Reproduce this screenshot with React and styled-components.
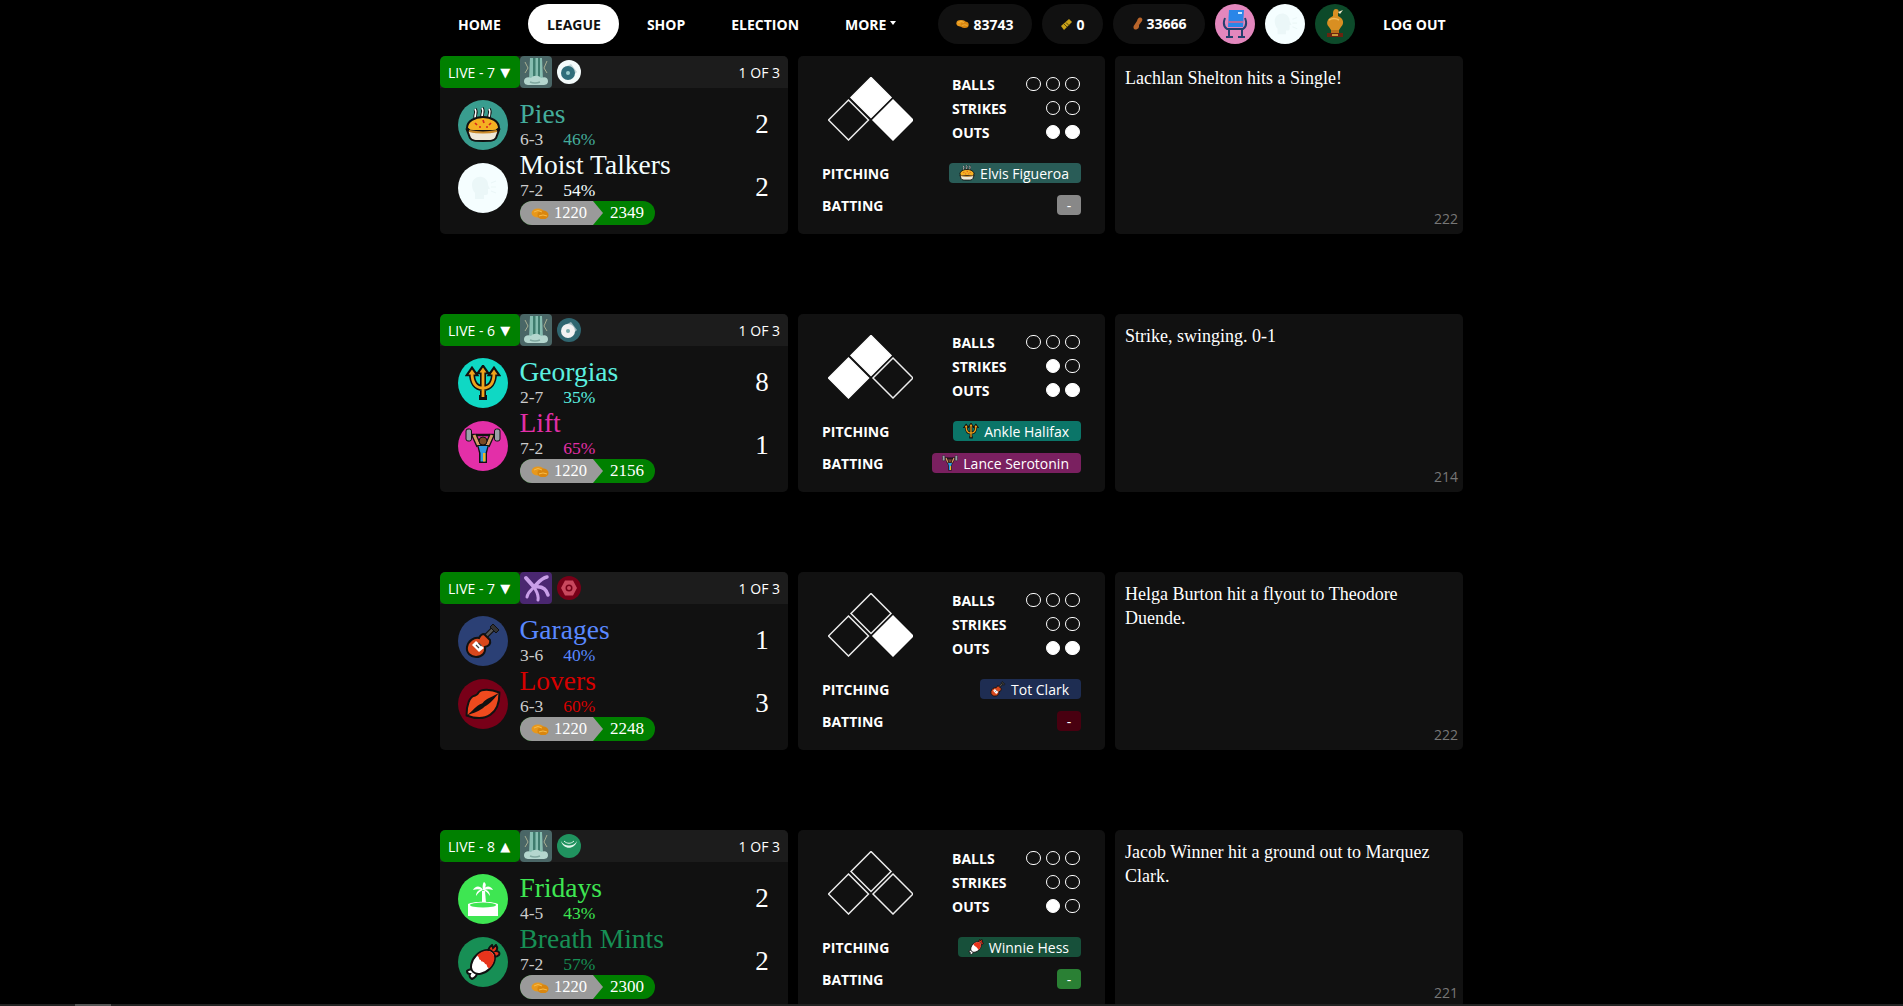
import React from "react";
import styled, { createGlobalStyle } from "styled-components";

const Global = createGlobalStyle`
  html, body { margin: 0; padding: 0; background: #000; height: 100%; overflow: hidden; }
  body { font-family: "Open Sans", "Liberation Sans", sans-serif; color: #fff; }
  #root { height: 100%; }
`;

const SERIF = `"Liberation Serif", "DejaVu Serif", serif`;

const Page = styled.div`
  width: 1023px;
  margin: 0 auto;
`;
const Nav = styled.nav`
  display: flex;
  align-items: center;
  height: 40px;
  padding: 4px 0 12px;
  white-space: nowrap;
`;
const NavLinks = styled.div`
  display: flex;
  gap: 9px;
  margin-left: -0.5px;
`;
const NavLink = styled.a`
  display: flex;
  flex: none;
  align-items: center;
  height: 40px;
  padding: 0 18.5px;
  border-radius: 20px;
  font-size: 14px;
  font-weight: 700;
  text-transform: uppercase;
  color: ${(p) => (p.$active ? "#111" : "#fff")};
  background: ${(p) => (p.$active ? "#fff" : "transparent")};
`;
const Caret = styled.span`
  display: inline-block;
  margin-left: 4px;
  margin-top: -2px;
  border-top: 4px solid #fff;
  border-left: 3px solid transparent;
  border-right: 3px solid transparent;
`;
const NavRight = styled.div`
  display: flex;
  flex: none;
  align-items: center;
  gap: 10px;
  margin-left: 23.5px;
`;
const Stat = styled.div`
  display: flex;
  align-items: center;
  gap: 4px;
  height: 40px;
  box-sizing: border-box;
  padding: 0 18px ${(p) => (p.$lift ? "2px" : "0")};
  border-radius: 20px;
  background: #111;
  font-size: 14px;
  font-weight: 700;
`;
const Avatar = styled.div`
  display: flex;
  flex: none;
  align-items: center;
  justify-content: center;
  width: 40px;
  height: 40px;
  border-radius: 50%;
  background: ${(p) => p.$bg};
`;

const Games = styled.div`
  display: flex;
  flex-direction: column;
  gap: 80px;
`;
const Game = styled.section`
  display: grid;
  grid-template-columns: 348px 307px 348px;
  gap: 10px;
  height: 178px;
`;
const Card = styled.div`
  background: #111;
  border-radius: 5px;
  overflow: hidden;
`;
const Strip = styled.header`
  display: flex;
  align-items: center;
  height: 32px;
  background: #1c1c1c;
  font-size: 14px;
`;
const LiveBadge = styled.div`
  display: flex;
  align-items: center;
  gap: 5px;
  width: 80px;
  box-sizing: border-box;
  height: 32px;
  padding-left: 8px;
  background: #008000;
  border-radius: 5px;
  white-space: nowrap;
`;
const Arrow = styled.span`
  font-family: "DejaVu Sans", sans-serif;
  font-size: 13px;
`;
const WeatherBox = styled.div`
  display: flex;
  width: 32px;
  height: 32px;
  border-radius: 4px;
  background: ${(p) => p.$bg};
`;
const StadiumMark = styled.div`
  display: flex;
  align-items: center;
  justify-content: center;
  width: 24px;
  height: 24px;
  margin-left: 5px;
  border-radius: 50%;
  background: ${(p) => p.$bg};
`;
const SeriesText = styled.span`
  margin-left: auto;
  padding-right: 8px;
`;
const Teams = styled.div`
  padding-top: 11px;
`;
const TeamRow = styled.div`
  display: flex;
  align-items: center;
  padding: 0 14px 0 18px;
`;
const TeamLogo = styled.div`
  display: flex;
  align-items: center;
  justify-content: center;
  flex: none;
  width: 50px;
  height: 50px;
  border-radius: 50%;
  background: ${(p) => p.$bg};
  margin-right: 12px;
`;
const TeamInfo = styled.div`
  flex: 1;
  min-width: 0;
`;
const TeamName = styled.div`
  font-family: ${SERIF};
  font-size: 27.5px;
  line-height: 30px;
  margin-left: -0.5px;
  color: ${(p) => p.$color};
`;
const TeamStats = styled.div`
  display: flex;
  gap: 20px;
  height: 21px;
  font-family: ${SERIF};
  font-size: 17.5px;
  line-height: 21px;
  color: #ccc;
`;
const Pct = styled.span`
  color: ${(p) => p.$color};
`;
const Score = styled.div`
  width: 24px;
  flex: none;
  text-align: center;
  font-family: ${SERIF};
  font-size: 27px;
`;
const Bet = styled.div`
  display: inline-flex;
  align-items: center;
  height: 24px;
  border-radius: 12px;
  overflow: hidden;
  background: #008000;
  font-family: ${SERIF};
  font-size: 17px;
  color: #fff;
`;
const BetStake = styled.span`
  display: flex;
  align-items: center;
  gap: 5px;
  height: 24px;
  width: 83px;
  box-sizing: border-box;
  padding-left: 11px;
  background: #9a9a9a;
  font-size: 16.5px;
  clip-path: polygon(0 0, 73px 0, 83px 50%, 73px 100%, 0 100%);
`;
const BetPayout = styled.span`
  padding: 0 11px 0 7px;
`;

const Middle = styled(Card)`
  display: flex;
  flex-direction: column;
`;
const Field = styled.div`
  display: flex;
  align-items: center;
  justify-content: space-between;
  height: 72px;
  padding: 16px 25.5px 0 30px;
`;
const BaseDiagram = styled.div`
  display: flex;
  margin-top: 1px;
`;
const Counts = styled.div`
  width: 127.5px;
`;
const CountRow = styled.div`
  display: flex;
  align-items: center;
  height: 24px;
  font-size: 14px;
  font-weight: 700;
`;
const Dots = styled.div`
  display: flex;
  gap: 4.5px;
  margin-left: auto;
`;
const Dot = styled.span`
  width: 14.7px;
  height: 14.7px;
  box-sizing: border-box;
  border-radius: 50%;
  border: 1.5px solid #fff;
  background: ${(p) => (p.$on ? "#fff" : "transparent")};
`;
const Players = styled.div`
  margin-top: 13px;
`;
const PlayerRow = styled.div`
  display: flex;
  align-items: center;
  justify-content: space-between;
  height: 32px;
  padding: 0 24px;
  font-size: 14px;
  font-weight: 700;
`;
const Chip = styled.div`
  display: flex;
  align-items: center;
  gap: 5px;
  height: 20px;
  min-width: 24px;
  box-sizing: border-box;
  padding: ${(p) => (p.$empty ? "0" : "0 12px 0 10px")};
  justify-content: center;
  border-radius: 4px;
  background: ${(p) => p.$bg};
  font-size: 14px;
  font-weight: 400;
  color: #fff;
`;
const LogCard = styled(Card)`
  display: flex;
  flex-direction: column;
  padding: 10px 5px 6px 10px;
`;
const LogText = styled.div`
  flex: 1;
  padding-right: 5px;
  font-family: ${SERIF};
  font-size: 18px;
  line-height: 24px;
  color: #fff;
`;
const LogCount = styled.div`
  text-align: right;
  font-size: 14px;
  line-height: 19px;
  color: #777;
`;
const ScrollTrack = styled.div`
  position: fixed;
  left: 0;
  right: 0;
  bottom: 0;
  height: 2px;
  background: #222;
`;
const ScrollThumb = styled.div`
  position: absolute;
  left: 75px;
  width: 36px;
  height: 2px;
  background: #555;
`;

/* ---------- drawings ---------- */
const Coin = ({ s = 18 }) => (
  <svg width={s} height={s * 0.72} viewBox="0 0 18 13">
    <ellipse cx="7" cy="6" rx="6.500" ry="4.600" fill="#e8981c" />
    <ellipse cx="12" cy="8" rx="5.600" ry="4.400" fill="#d9860f" />
    <path d="M3 5q4-3 8 0M8 9q4-2 8 0" stroke="#f7bd4a" strokeWidth="1" fill="none" />
  </svg>
);
const Ticket = () => (
  <svg width="13" height="13" viewBox="0 0 13 13">
    <path d="M1 8 9 1l3 3-8 8z" fill="#c9a21a" />
    <path d="M4 6l3 3M6 4.500l3 3" stroke="#5c4a08" strokeWidth="1" />
  </svg>
);
const Peanut = () => (
  <svg width="12" height="13" viewBox="-2 0 12 13">
    <path d="M7 0.500c2 0 3 2 2 3.500L6 8c.5 3-1.500 4.500-3.500 4.500C.5 12.500 0 10 1 8.500L4 4C4.500 2 5.500 .5 7 .5z" fill="#b9652b" />
  </svg>
);
const Chair = () => (
  <svg width="26" height="30" viewBox="0 0 26 30">
    <path d="M7 1h15l-1 17H6z" fill="#2a86e8" />
    <path d="M6.500 13h14.500" stroke="#e8608a" strokeWidth="1.500" />
    <path d="M16 3h4v2h-4z" fill="#cfe8ff" />
    <path d="M3 9c-2 5-1 9 2 11h16c3-2 4-6 2-11M7 20v8M20 20v8M4 28h7M16 28h7" stroke="#25406e" strokeWidth="2" fill="none" />
  </svg>
);
const Trophy = () => (
  <svg width="24" height="32" viewBox="0 0 24 32">
    <path d="M13 1c3 0 3 3 2 5v2c5 2 7 7 3 11l-2 3h-8l-2-3C2 15 5 10 10 8V5c0-2 1-4 3-4z" fill="#d98f22" />
    <path d="M15 4l5-2-3 4z" fill="#f2e6c8" />
    <path d="M6 12q5-3 10 0" stroke="#f1bb5a" strokeWidth="1.500" fill="none" />
    <path d="M8 22h8v3H8z" fill="#b9701a" />
    <path d="M4 25h16v4H4z" fill="#6b2410" />
    <path d="M9 26h6v2H9z" fill="#c89a38" />
  </svg>
);
const Head = ({ s = 30 }) => (
  <svg width={s} height={s} viewBox="0 0 30 30">
    <path d="M4 12c0-6 5-9 10-8 4 1 6 4 6 8l2 4h-2v4c0 2-2 2-4 2v4H7v-6c-2-2-3-5-3-8z" fill="#ebf7f8" />
    <path d="M23 10l5-2M23 14h5M23 18l5 2" stroke="#ebf7f8" strokeWidth="1.200" />
  </svg>
);
const PieIcon = ({ s = 36 }) => (
  <svg width={s} height={s} viewBox="0 0 36 36">
    <g fill="none">
      <path d="M11 12C8 9 13 6 10 2M18 11c-3-3 2-6-1-10M25 12c-3-3 2-6-1-10" stroke="#111" strokeWidth="3.500" />
      <path d="M11 12C8 9 13 6 10 2M18 11c-3-3 2-6-1-10M25 12c-3-3 2-6-1-10" stroke="#fff" strokeWidth="1.700" />
    </g>
    <path d="M2 21c0-7 8-11 16-11s16 4 16 11l-3 3H5z" fill="#f4b022" stroke="#111" strokeWidth="2" />
    <path d="M2 23c6 2 26 2 32 0l-3 8c-2 3-5 3-13 3s-11 0-13-3z" fill="#efe9d8" stroke="#111" strokeWidth="2" />
    <path d="M10 16l2 2M18 13l1 3M26 16l-2 2M14 20h2M21 20h2" stroke="#d8281e" strokeWidth="1.700" />
    <path d="M4 24q14 3 28 0" stroke="#c98a2a" strokeWidth="2" fill="none" />
  </svg>
);
const TRIDENT = "M18 7v25M7 8c0 10 4 15 11 15s11-5 11-15";
const Trident = ({ s = 36 }) => (
  <svg width={s} height={s} viewBox="0 0 36 36">
    <path d="M18 1l5 7h-10zM7 3l5 7H2zM29 3l5 7H24z" fill="#111" stroke="#111" strokeWidth="2.500" />
    <path d={TRIDENT} fill="none" stroke="#111" strokeWidth="6" />
    <path d="M14 30h8v5h-8z" fill="#111" />
    <path d="M18 2.500l3.500 5h-7zM7 4.500l3.500 5h-7zM29 4.500l3.500 5h-7z" fill="#f0a41c" />
    <path d={TRIDENT} fill="none" stroke="#f0a41c" strokeWidth="2.800" />
  </svg>
);
const Lifter = ({ s = 36 }) => (
  <svg width={s} height={s} viewBox="0 0 36 36">
    <path d="M1 7h34" stroke="#111" strokeWidth="2.500" />
    <rect x="1" y="1" width="5.500" height="12" rx="2" fill="#9aa0a8" stroke="#111" />
    <rect x="29.500" y="1" width="5.500" height="12" rx="2" fill="#9aa0a8" stroke="#111" />
    <path d="M9 7l5 11M27 7l-5 11" fill="none" stroke="#111" strokeWidth="5.500" />
    <path d="M9 7l5 11M27 7l-5 11" fill="none" stroke="#d99a66" strokeWidth="3" />
    <path d="M12 17h12l-2 8v10h-8V25z" fill="#111" />
    <path d="M13.500 18h9l-2 7v8.500h-5V25z" fill="#2f9ae0" />
    <path d="M18 25h2.500v8.500H18z" fill="#f0b428" />
    <circle cx="18" cy="13" r="4" fill="#7a4a25" stroke="#111" />
  </svg>
);
const Guitar = ({ s = 36 }) => (
  <svg width={s} height={s} viewBox="0 0 36 36">
    <path d="M19 15L29 5" stroke="#111" strokeWidth="5" />
    <path d="M19 15L29 5" stroke="#555" strokeWidth="2.500" />
    <path d="M28 1l6 6-3 3-6-6z" fill="#333" stroke="#111" />
    <path d="M19 11c-3 0-4 2-5 4-5-1-11 3-12 9-1 6 4 10 9 10 6 0 10-4 9-10 4-1 6-3 5-7z" fill="#d9481c" stroke="#111" strokeWidth="2" />
    <path d="M11 18l8 7-5 4-7-7z" fill="#fff" />
    <path d="M11 22l3 3M13.500 20l3 3" stroke="#444" strokeWidth="1.200" />
  </svg>
);
const Lips = ({ s = 36 }) => (
  <svg width={s} height={s} viewBox="0 0 36 36">
    <g transform="rotate(-35 18 18)">
      <path d="M-2 18C4 9 11 5 15 6c1.500 1 4.500 1 6 0 4-1 11 3 17 12-6 9-13 13-20 13S4 27-2 18z" fill="#ef4a1e" stroke="#111" strokeWidth="2" />
      <path d="M-2 18c8 0 13-3 20-1 7-2 12 1 20 1-8 2-13 4-20 3-7 1-12-1-20-3z" fill="#111" />
    </g>
  </svg>
);
const Palm = ({ s = 36 }) => (
  <svg width={s} height={s} viewBox="0 0 36 36">
    <path d="M17 10h3l1 12h-4z" fill="#fff" />
    <path d="M18 9C15 4 10 5 8 9c3-1 6-1 10 0zM18 9c3-5 8-4 10 0-3-1-6-1-10 0zM18 9c-1-4 0-7 1-8 3 2 2 5-1 8zM18 9c-4-1-7 2-7 6 2-3 4-5 7-6zM18 9c4-1 7 2 7 6-2-3-4-5-7-6z" fill="#fff" />
    <path d="M3 23c6-3 24-3 30 0v12H3z" fill="#fff" />
    <ellipse cx="18" cy="24" rx="13" ry="2.500" fill="#3ee652" />
  </svg>
);
const Candy = ({ s = 36 }) => (
  <svg width={s} height={s} viewBox="0 0 36 36">
    <path d="M23 9c0-3 1-6 4-8l1 3 3-3c2 3 1 5 0 6 3 0 4 2 3 4-2 2-6 2-9 1z" fill="#e8341c" stroke="#111" strokeWidth="2" />
    <path d="M10 25c-3 0-6 0-8 2 0 2 1 3 3 3-1 2 0 4 2 5 2-1 5-3 5-6z" fill="#fff" stroke="#111" strokeWidth="2" />
    <g transform="rotate(-45 18 18)">
      <ellipse cx="18" cy="18" rx="14" ry="9.500" fill="#fff" stroke="#111" strokeWidth="2" />
      <path d="M18 9c8 0 13 4 13 9s-5 9-13 9c-2-3 2-4 0-6 2-3-2-4 0-6-2-2 2-3 0-6z" fill="#e8341c" />
    </g>
  </svg>
);
const Waterfall = () => (
  <svg width="32" height="32" viewBox="0 0 32 32">
    <path d="M10 2h12l1 22H9z" fill="#86bdb0" />
    <path d="M13 2h2.500v22H13zM18 2h2v22h-2z" fill="#3f7c6e" />
    <path d="M4 25c0-3 4-5 7-3 2-3 8-3 10 0 4-2 7 0 7 3 0 3-2 4-5 4H9c-3 0-5-1-5-4z" fill="#b4d6ce" />
    <path d="M10 26q5 2 10 0" stroke="#7fa79f" strokeWidth="1.500" fill="none" />
    <path d="M5 6l3 6-3 5M27 5l-3 7 3 5" stroke="#a7ae92" strokeWidth="1" fill="none" />
  </svg>
);
const Claw = () => (
  <svg width="32" height="32" viewBox="0 0 32 32">
    <g fill="none" stroke="#c99fe8" strokeLinecap="round">
      <path d="M14 15L6 6" strokeWidth="4" />
      <path d="M14 15C18 11 21 6 27 5" strokeWidth="3.500" />
      <path d="M14 15c6-1 12 0 14 8" strokeWidth="3.500" />
      <path d="M14 15c2 4 5 7 4 13" strokeWidth="3" />
      <path d="M14 15c-2 3-6 4-7 10" strokeWidth="3" />
    </g>
  </svg>
);
const Disc = ({ fg, bg, hole }) => (
  <svg width="18" height="18" viewBox="0 0 18 18">
    <path d="M3 5l8-4 6 8-8 7z" fill={bg} />
    <circle cx="8" cy="10" r="7" fill={fg} />
    <circle cx="8" cy="10" r="2" fill={hole} />
  </svg>
);
const Hex = () => (
  <svg width="18" height="18" viewBox="0 0 18 18">
    <path d="M5 1.500h8L17 9l-4 7.500H5L1 9z" fill="#c9485e" />
    <circle cx="9" cy="9" r="3.500" fill="#780018" />
    <circle cx="9" cy="9" r="2" fill="#c9485e" />
  </svg>
);
const Smile = () => (
  <svg width="18" height="12" viewBox="0 0 18 12">
    <path d="M1 1c3 6 13 6 16 0-2 9-14 9-16 0z" fill="#dff5ea" />
    <path d="M4 1c3 3 7 3 10 0" stroke="#dff5ea" strokeWidth="1" fill="none" />
  </svg>
);
const Diamond = ({ x, y, on }) => (
  <path
    d={`M${x} ${y - 20}L${x + 20} ${y}L${x} ${y + 20}L${x - 20} ${y}Z`}
    fill={on ? "#fff" : "none"}
    stroke={on ? "#fff" : "#eee"}
    strokeWidth="1.500"
  />
);
const Bases = ({ first, second, third }) => (
  <BaseDiagram>
    <svg width="85" height="64" viewBox="0 0 85 64">
      <Diamond x={20.500} y={43} on={third} />
      <Diamond x={43} y={20.500} on={second} />
      <Diamond x={65} y={43} on={first} />
    </svg>
  </BaseDiagram>
);

/* ---------- data ---------- */
const games = [
  {
    live: "LIVE - 7", arrow: "▼", wbg: "#4a6666", weather: <Waterfall />,
    sbg: "#f4fbfb", stadium: <Disc fg="#2f6d7a" bg="#c3d6d8" hole="#9cc" />,
    a: { name: "Pies", rec: "6-3", pct: "46%", score: 2, color: "#44ad9c", bg: "#399d8f", icon: <PieIcon /> },
    b: { name: "Moist Talkers", rec: "7-2", pct: "54%", score: 2, color: "#f5feff", bg: "#f5feff", icon: <Head /> },
    payout: 2349, bases: [1, 1, 0], balls: 0, strikes: 0, outs: 2,
    pitcher: { name: "Elvis Figueroa", bg: "#295c57", icon: <PieIcon s={16} /> },
    batter: { bg: "#888" },
    log: "Lachlan Shelton hits a Single!", count: 222,
  },
  {
    live: "LIVE - 6", arrow: "▼", wbg: "#4a6666", weather: <Waterfall />,
    sbg: "#2f6670", stadium: <Disc fg="#f2f2f2" bg="#9fb8bc" hole="#7aa" />,
    a: { name: "Georgias", rec: "2-7", pct: "35%", score: 8, color: "#5bf0e0", bg: "#0fd8c4", icon: <Trident /> },
    b: { name: "Lift", rec: "7-2", pct: "65%", score: 1, color: "#e32fa8", bg: "#e32fa8", icon: <Lifter /> },
    payout: 2156, bases: [0, 1, 1], balls: 0, strikes: 1, outs: 2,
    pitcher: { name: "Ankle Halifax", bg: "#0b7568", icon: <Trident s={16} /> },
    batter: { name: "Lance Serotonin", bg: "#7a2060", icon: <Lifter s={16} /> },
    log: "Strike, swinging. 0-1", count: 214,
  },
  {
    live: "LIVE - 7", arrow: "▼", wbg: "#4a2770", weather: <Claw />,
    sbg: "#780018", stadium: <Hex />,
    a: { name: "Garages", rec: "3-6", pct: "40%", score: 1, color: "#5988ff", bg: "#2b4075", icon: <Guitar /> },
    b: { name: "Lovers", rec: "6-3", pct: "60%", score: 3, color: "#d70000", bg: "#780018", icon: <Lips /> },
    payout: 2248, bases: [1, 0, 0], balls: 0, strikes: 0, outs: 2,
    pitcher: { name: "Tot Clark", bg: "#1e2d52", icon: <Guitar s={16} /> },
    batter: { bg: "#480010" },
    log: "Helga Burton hit a flyout to Theodore Duende.", count: 222,
  },
  {
    live: "LIVE - 8", arrow: "▲", wbg: "#4a6666", weather: <Waterfall />,
    sbg: "#20935f", stadium: <Smile />,
    a: { name: "Fridays", rec: "4-5", pct: "43%", score: 2, color: "#3ee652", bg: "#3ee652", icon: <Palm /> },
    b: { name: "Breath Mints", rec: "7-2", pct: "57%", score: 2, color: "#178f55", bg: "#178f55", icon: <Candy /> },
    payout: 2300, bases: [0, 0, 0], balls: 0, strikes: 0, outs: 1,
    pitcher: { name: "Winnie Hess", bg: "#17503a", icon: <Candy s={16} /> },
    batter: { bg: "#2a8034" },
    log: "Jacob Winner hit a ground out to Marquez Clark.", count: 221,
  },
];

const DotRow = ({ label, total, on }) => (
  <CountRow>
    {label}
    <Dots>
      {Array.from({ length: total }, (_, i) => (
        <Dot key={i} $on={i < on} />
      ))}
    </Dots>
  </CountRow>
);

const Team = ({ t, payout }) => (
  <TeamRow>
    <TeamLogo $bg={t.bg}>{t.icon}</TeamLogo>
    <TeamInfo>
      <TeamName $color={t.color}>{t.name}</TeamName>
      <TeamStats>
        {t.rec}
        <Pct $color={t.color}>{t.pct}</Pct>
      </TeamStats>
      {payout && (
        <Bet>
          <BetStake>
            <Coin />
            1220
          </BetStake>
          <BetPayout>{payout}</BetPayout>
        </Bet>
      )}
    </TeamInfo>
    <Score>{t.score}</Score>
  </TeamRow>
);

const Player = ({ p }) => (
  <Chip $bg={p.bg} $empty={!p.name}>
    {p.icon}
    {p.name || "-"}
  </Chip>
);

export default function App() {
  return (
    <Page>
      <Global />
      <Nav>
        <NavLinks>
          <NavLink>Home</NavLink>
          <NavLink $active>League</NavLink>
          <NavLink>Shop</NavLink>
          <NavLink>Election</NavLink>
          <NavLink>
            More
            <Caret />
          </NavLink>
        </NavLinks>
        <NavRight>
          <Stat><Coin s={13} />83743</Stat>
          <Stat><Ticket />0</Stat>
          <Stat $lift><Peanut />33666</Stat>
          <Avatar $bg="#e387bd"><Chair /></Avatar>
          <Avatar $bg="#f5feff"><Head s={28} /></Avatar>
          <Avatar $bg="#0d4a2a"><Trophy /></Avatar>
          <NavLink>Log out</NavLink>
        </NavRight>
      </Nav>
      <Games>
        {games.map((g, i) => (
          <Game key={i}>
            <Card>
              <Strip>
                <LiveBadge>
                  {g.live}
                  <Arrow>{g.arrow}</Arrow>
                </LiveBadge>
                <WeatherBox $bg={g.wbg}>{g.weather}</WeatherBox>
                <StadiumMark $bg={g.sbg}>{g.stadium}</StadiumMark>
                <SeriesText>1 OF 3</SeriesText>
              </Strip>
              <Teams>
                <Team t={g.a} />
                <Team t={g.b} payout={g.payout} />
              </Teams>
            </Card>
            <Middle>
              <Field>
                <Bases first={g.bases[0]} second={g.bases[1]} third={g.bases[2]} />
                <Counts>
                  <DotRow label="BALLS" total={3} on={g.balls} />
                  <DotRow label="STRIKES" total={2} on={g.strikes} />
                  <DotRow label="OUTS" total={2} on={g.outs} />
                </Counts>
              </Field>
              <Players>
                <PlayerRow>PITCHING<Player p={g.pitcher} /></PlayerRow>
                <PlayerRow>BATTING<Player p={g.batter} /></PlayerRow>
              </Players>
            </Middle>
            <LogCard>
              <LogText>{g.log}</LogText>
              <LogCount>{g.count}</LogCount>
            </LogCard>
          </Game>
        ))}
      </Games>
      <ScrollTrack>
        <ScrollThumb />
      </ScrollTrack>
    </Page>
  );
}
